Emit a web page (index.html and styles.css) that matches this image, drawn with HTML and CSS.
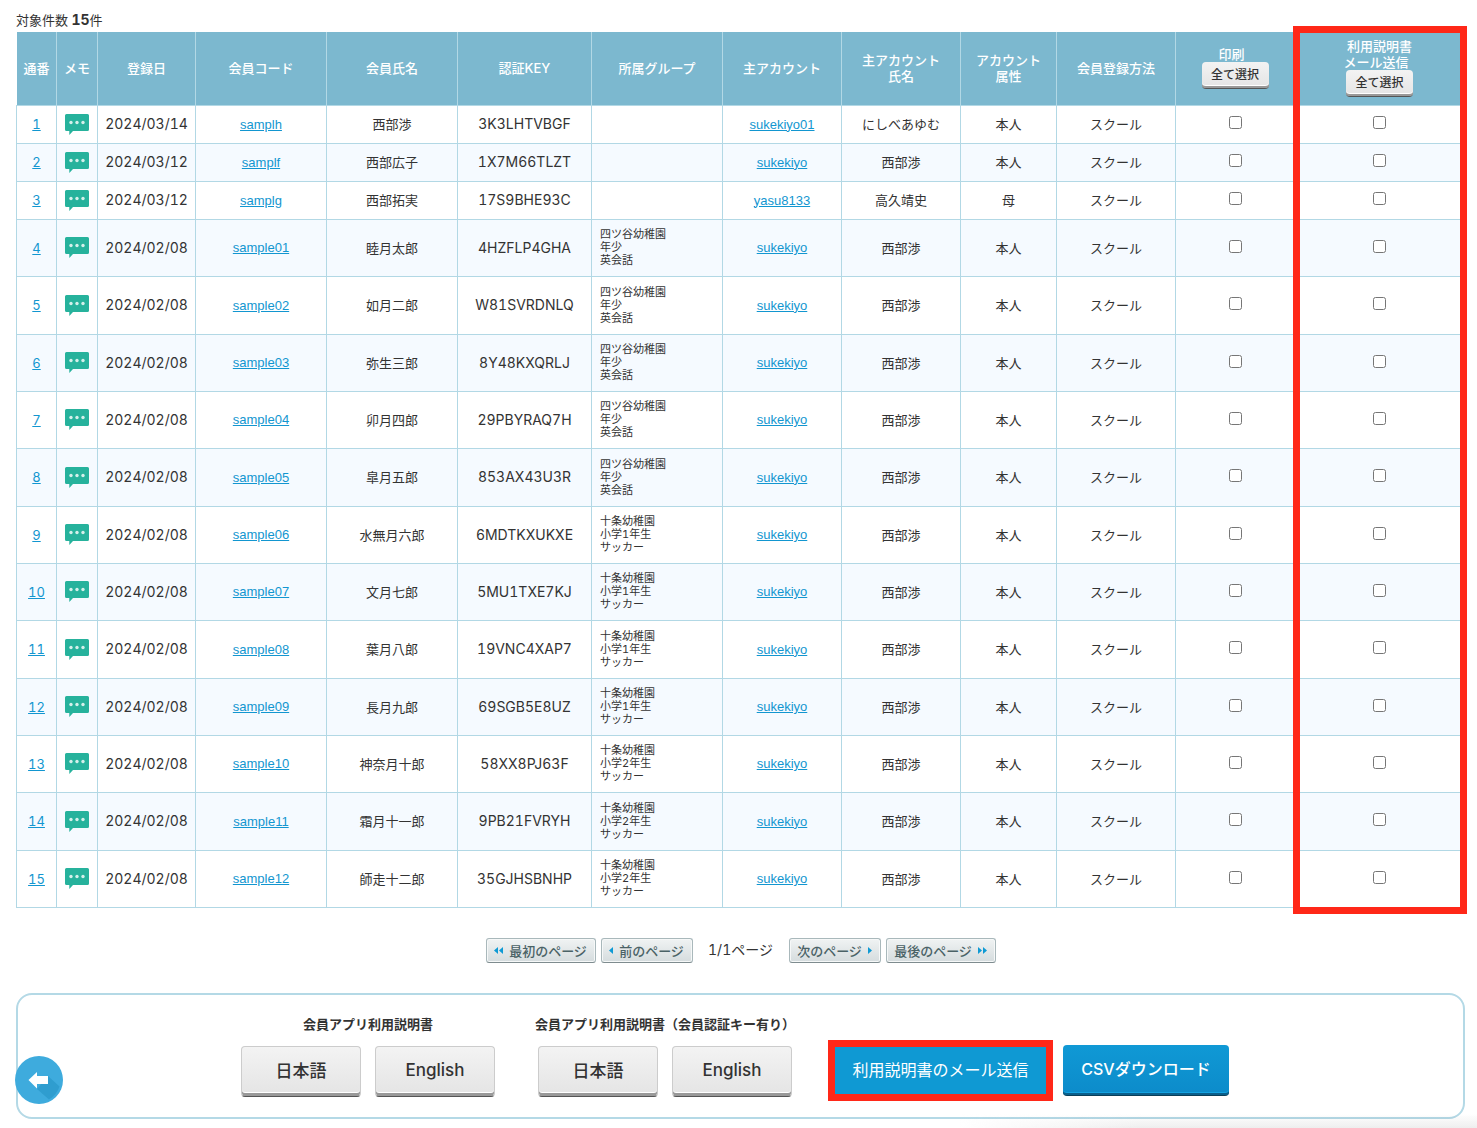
FILE: index.html
```html
<!DOCTYPE html>
<html lang="ja">
<head>
<meta charset="utf-8">
<title>会員一覧</title>
<link rel="stylesheet" href="styles.css">
</head>
<body>
<svg class="sprite" aria-hidden="true">
  <symbol id="memo" viewBox="0 0 24 21">
    <path d="M1.500 0h21A1.500 1.500 0 0 1 24 1.500v14a1.500 1.500 0 0 1-1.500 1.500H8L4.300 21V17H1.500A1.500 1.500 0 0 1 0 15.500v-14A1.500 1.500 0 0 1 1.500 0z" fill="#26b29c"/>
    <circle cx="6" cy="8.500" r="1.700" fill="#d4f0eb"/><circle cx="12" cy="8.500" r="1.700" fill="#d4f0eb"/><circle cx="18" cy="8.500" r="1.700" fill="#d4f0eb"/>
  </symbol>
  <symbol id="left" viewBox="0 0 4 7"><path d="M4 0v7L0 3.500z" fill="#0e9ad4"/></symbol>
  <symbol id="right" viewBox="0 0 4 7"><path d="M0 0v7l4-3.500z" fill="#0e9ad4"/></symbol>
</svg>
<main>
  <p class="count">対象件数 <b>15</b>件</p>
  <div class="table-wrap">
    <table class="members">
      <colgroup>
        <col class="c-no"><col class="c-memo"><col class="c-date"><col class="c-code"><col class="c-code"><col class="c-key"><col class="c-code"><col class="c-account"><col class="c-account"><col class="c-attr"><col class="c-account"><col class="c-account"><col>
      </colgroup>
      <thead>
        <tr>
          <th>通番</th><th>メモ</th><th>登録日</th><th>会員コード</th><th>会員氏名</th><th>認証KEY</th><th>所属グループ</th><th>主アカウント</th><th>主アカウント<br>氏名</th><th>アカウント<br>属性</th><th>会員登録方法</th>
          <th>印刷&nbsp;&nbsp;<button type="button" class="select-all">全て選択</button></th>
          <th>利用説明書<br>メール送信&nbsp;&nbsp;<button type="button" class="select-all">全て選択</button></th>
        </tr>
      </thead>
      <tbody>
        <tr><td><a href="#">1</a></td><td><svg class="memo"><use href="#memo"/></svg></td><td class="code">2024/03/14</td><td><a class="id" href="#">samplh</a></td><td>西部渉</td><td class="code">3K3LHTVBGF</td><td class="group"></td><td><a class="id" href="#">sukekiyo01</a></td><td>にしべあゆむ</td><td>本人</td><td>スクール</td><td><input type="checkbox" aria-label="印刷 1"></td><td><input type="checkbox" aria-label="メール送信 1"></td></tr>
        <tr><td><a href="#">2</a></td><td><svg class="memo"><use href="#memo"/></svg></td><td class="code">2024/03/12</td><td><a class="id" href="#">samplf</a></td><td>西部広子</td><td class="code">1X7M66TLZT</td><td class="group"></td><td><a class="id" href="#">sukekiyo</a></td><td>西部渉</td><td>本人</td><td>スクール</td><td><input type="checkbox" aria-label="印刷 2"></td><td><input type="checkbox" aria-label="メール送信 2"></td></tr>
        <tr><td><a href="#">3</a></td><td><svg class="memo"><use href="#memo"/></svg></td><td class="code">2024/03/12</td><td><a class="id" href="#">samplg</a></td><td>西部拓実</td><td class="code">17S9BHE93C</td><td class="group"></td><td><a class="id" href="#">yasu8133</a></td><td>高久靖史</td><td>母</td><td>スクール</td><td><input type="checkbox" aria-label="印刷 3"></td><td><input type="checkbox" aria-label="メール送信 3"></td></tr>
        <tr><td><a href="#">4</a></td><td><svg class="memo"><use href="#memo"/></svg></td><td class="code">2024/02/08</td><td><a class="id" href="#">sample01</a></td><td>睦月太郎</td><td class="code">4HZFLP4GHA</td><td class="group">四ツ谷幼稚園<br>年少<br>英会話</td><td><a class="id" href="#">sukekiyo</a></td><td>西部渉</td><td>本人</td><td>スクール</td><td><input type="checkbox" aria-label="印刷 4"></td><td><input type="checkbox" aria-label="メール送信 4"></td></tr>
        <tr><td><a href="#">5</a></td><td><svg class="memo"><use href="#memo"/></svg></td><td class="code">2024/02/08</td><td><a class="id" href="#">sample02</a></td><td>如月二郎</td><td class="code">W81SVRDNLQ</td><td class="group">四ツ谷幼稚園<br>年少<br>英会話</td><td><a class="id" href="#">sukekiyo</a></td><td>西部渉</td><td>本人</td><td>スクール</td><td><input type="checkbox" aria-label="印刷 5"></td><td><input type="checkbox" aria-label="メール送信 5"></td></tr>
        <tr><td><a href="#">6</a></td><td><svg class="memo"><use href="#memo"/></svg></td><td class="code">2024/02/08</td><td><a class="id" href="#">sample03</a></td><td>弥生三郎</td><td class="code">8Y48KXQRLJ</td><td class="group">四ツ谷幼稚園<br>年少<br>英会話</td><td><a class="id" href="#">sukekiyo</a></td><td>西部渉</td><td>本人</td><td>スクール</td><td><input type="checkbox" aria-label="印刷 6"></td><td><input type="checkbox" aria-label="メール送信 6"></td></tr>
        <tr><td><a href="#">7</a></td><td><svg class="memo"><use href="#memo"/></svg></td><td class="code">2024/02/08</td><td><a class="id" href="#">sample04</a></td><td>卯月四郎</td><td class="code">29PBYRAQ7H</td><td class="group">四ツ谷幼稚園<br>年少<br>英会話</td><td><a class="id" href="#">sukekiyo</a></td><td>西部渉</td><td>本人</td><td>スクール</td><td><input type="checkbox" aria-label="印刷 7"></td><td><input type="checkbox" aria-label="メール送信 7"></td></tr>
        <tr><td><a href="#">8</a></td><td><svg class="memo"><use href="#memo"/></svg></td><td class="code">2024/02/08</td><td><a class="id" href="#">sample05</a></td><td>皐月五郎</td><td class="code">853AX43U3R</td><td class="group">四ツ谷幼稚園<br>年少<br>英会話</td><td><a class="id" href="#">sukekiyo</a></td><td>西部渉</td><td>本人</td><td>スクール</td><td><input type="checkbox" aria-label="印刷 8"></td><td><input type="checkbox" aria-label="メール送信 8"></td></tr>
        <tr><td><a href="#">9</a></td><td><svg class="memo"><use href="#memo"/></svg></td><td class="code">2024/02/08</td><td><a class="id" href="#">sample06</a></td><td>水無月六郎</td><td class="code">6MDTKXUKXE</td><td class="group">十条幼稚園<br>小学1年生<br>サッカー</td><td><a class="id" href="#">sukekiyo</a></td><td>西部渉</td><td>本人</td><td>スクール</td><td><input type="checkbox" aria-label="印刷 9"></td><td><input type="checkbox" aria-label="メール送信 9"></td></tr>
        <tr><td><a href="#">10</a></td><td><svg class="memo"><use href="#memo"/></svg></td><td class="code">2024/02/08</td><td><a class="id" href="#">sample07</a></td><td>文月七郎</td><td class="code">5MU1TXE7KJ</td><td class="group">十条幼稚園<br>小学1年生<br>サッカー</td><td><a class="id" href="#">sukekiyo</a></td><td>西部渉</td><td>本人</td><td>スクール</td><td><input type="checkbox" aria-label="印刷 10"></td><td><input type="checkbox" aria-label="メール送信 10"></td></tr>
        <tr><td><a href="#">11</a></td><td><svg class="memo"><use href="#memo"/></svg></td><td class="code">2024/02/08</td><td><a class="id" href="#">sample08</a></td><td>葉月八郎</td><td class="code">19VNC4XAP7</td><td class="group">十条幼稚園<br>小学1年生<br>サッカー</td><td><a class="id" href="#">sukekiyo</a></td><td>西部渉</td><td>本人</td><td>スクール</td><td><input type="checkbox" aria-label="印刷 11"></td><td><input type="checkbox" aria-label="メール送信 11"></td></tr>
        <tr><td><a href="#">12</a></td><td><svg class="memo"><use href="#memo"/></svg></td><td class="code">2024/02/08</td><td><a class="id" href="#">sample09</a></td><td>長月九郎</td><td class="code">69SGB5E8UZ</td><td class="group">十条幼稚園<br>小学1年生<br>サッカー</td><td><a class="id" href="#">sukekiyo</a></td><td>西部渉</td><td>本人</td><td>スクール</td><td><input type="checkbox" aria-label="印刷 12"></td><td><input type="checkbox" aria-label="メール送信 12"></td></tr>
        <tr><td><a href="#">13</a></td><td><svg class="memo"><use href="#memo"/></svg></td><td class="code">2024/02/08</td><td><a class="id" href="#">sample10</a></td><td>神奈月十郎</td><td class="code">58XX8PJ63F</td><td class="group">十条幼稚園<br>小学2年生<br>サッカー</td><td><a class="id" href="#">sukekiyo</a></td><td>西部渉</td><td>本人</td><td>スクール</td><td><input type="checkbox" aria-label="印刷 13"></td><td><input type="checkbox" aria-label="メール送信 13"></td></tr>
        <tr><td><a href="#">14</a></td><td><svg class="memo"><use href="#memo"/></svg></td><td class="code">2024/02/08</td><td><a class="id" href="#">sample11</a></td><td>霜月十一郎</td><td class="code">9PB21FVRYH</td><td class="group">十条幼稚園<br>小学2年生<br>サッカー</td><td><a class="id" href="#">sukekiyo</a></td><td>西部渉</td><td>本人</td><td>スクール</td><td><input type="checkbox" aria-label="印刷 14"></td><td><input type="checkbox" aria-label="メール送信 14"></td></tr>
        <tr><td><a href="#">15</a></td><td><svg class="memo"><use href="#memo"/></svg></td><td class="code">2024/02/08</td><td><a class="id" href="#">sample12</a></td><td>師走十二郎</td><td class="code">35GJHSBNHP</td><td class="group">十条幼稚園<br>小学2年生<br>サッカー</td><td><a class="id" href="#">sukekiyo</a></td><td>西部渉</td><td>本人</td><td>スクール</td><td><input type="checkbox" aria-label="印刷 15"></td><td><input type="checkbox" aria-label="メール送信 15"></td></tr>
      </tbody>
    </table>
    <div class="column-mark"></div>
  </div>

  <nav class="pager">
    <button type="button" class="page wide"><span class="arrows"><svg><use href="#left"/></svg><svg><use href="#left"/></svg></span>最初のページ</button>
    <button type="button" class="page"><span class="arrows"><svg><use href="#left"/></svg></span>前のページ</button>
    <span class="page-now">1/1ページ</span>
    <button type="button" class="page">次のページ<span class="arrows"><svg><use href="#right"/></svg></span></button>
    <button type="button" class="page wide">最後のページ<span class="arrows"><svg><use href="#right"/></svg><svg><use href="#right"/></svg></span></button>
  </nav>

  <section class="actions">
    <div class="manual">
      <h2>会員アプリ利用説明書</h2>
      <div class="langs"><button type="button" class="btn">日本語</button><button type="button" class="btn">English</button></div>
    </div>
    <div class="manual">
      <h2>会員アプリ利用説明書（会員認証キー有り）</h2>
      <div class="langs"><button type="button" class="btn">日本語</button><button type="button" class="btn">English</button></div>
    </div>
    <div class="sends">
      <button type="button" class="send">利用説明書のメール送信</button>
      <button type="button" class="btn csv">CSVダウンロード</button>
    </div>
    <a class="back" href="#" aria-label="戻る">
      <svg viewBox="0 0 48 48">
        <circle cx="24" cy="24" r="24" fill="#3eabdd"/>
        <path d="M22 33L33 20 44.500 30.500A24 24 0 0 1 34 43.500z" fill="#2f9dcf"/>
        <path d="M13.500 24L22 16v4h11v8H22v4.500z" fill="#fff"/>
      </svg>
    </a>
  </section>
</main>
</body>
</html>
```
FILE: styles.css
```css
* { box-sizing: border-box; }

body {
  margin: 0;
  padding: 12px 12px 9px 16px;
  background: #fff;
  color: #333;
  font: 13px/16px Inter, "Noto Sans CJK JP", sans-serif;
  font-variant-numeric: tabular-nums;
}

body::after {
  content: "";
  position: fixed;
  right: 0;
  bottom: 0;
  width: 35%;
  height: 14px;
  background: linear-gradient(to right, #fff, transparent 35%), linear-gradient(transparent, #eee);
  mix-blend-mode: multiply;
  pointer-events: none;
}

button { font-family: inherit; margin: 0; cursor: pointer; }
a { color: #1296d0; text-decoration: underline; }
.sprite { position: absolute; width: 0; height: 0; }

.count { margin: 0 0 4px; }
.count b { font-size: 14px; }

/* Member table */
.table-wrap { position: relative; }

.members {
  width: 100%;
  table-layout: fixed;
  border-collapse: collapse;
  text-align: center;
}

.c-no { width: 40px; }
.c-memo { width: 41px; }
.c-date { width: 98px; }
.c-code { width: 131px; }
.c-key { width: 134px; }
.c-account { width: 119px; }
.c-attr { width: 96px; }

.members th {
  height: 73px;
  padding: 0 0 1px;
  border: 1px solid #b2d8e5;
  border-top: 0;
  background: #7cb8cf;
  color: #fff;
  font-weight: 500;
}

.members th:first-child { border-left-color: #fff; }

.members td {
  height: 38px;
  padding: 0;
  border: 1px solid #b2d8e5;
}

.members tr:nth-child(n+4) td { height: 57px; }
.members tr:nth-child(3n+5) td { height: 58px; }
.members tbody tr:nth-child(even) { background: #f5faff; }

.members .code { font-size: 14px; }
.members .id { font-family: "Liberation Sans", sans-serif; }

.members .group {
  padding: 0 8px;
  font-size: 11px;
  line-height: 13px;
  text-align: left;
}

.memo { display: block; width: 24px; height: 21px; margin: 0 auto; }
.members input { display: block; margin: 0 auto 3px; }

.select-all {
  display: block;
  width: 67px;
  height: 27px;
  margin: 0 auto;
  padding: 0 0 3px;
  border: 0;
  border-bottom: 1px solid #555;
  border-radius: 4px;
  background: linear-gradient(#f3f3f3, #e4e4e4);
  box-shadow: inset 0 -2px #999, inset 0 -3px #fff;
  color: #333;
  font-size: 12px;
  font-weight: 500;
}

.column-mark {
  position: absolute;
  top: -6px;
  right: -2px;
  bottom: -6px;
  width: 174px;
  border: 7px solid #ff2818;
  pointer-events: none;
}

/* Pager */
.pager {
  display: flex;
  justify-content: center;
  align-items: center;
  gap: 5px;
  margin-top: 30px;
}

.page {
  display: flex;
  justify-content: center;
  align-items: center;
  gap: 6px;
  width: 92px;
  height: 25px;
  padding: 0;
  border: 1px solid #a9b8bb;
  border-bottom-color: #7e8c8f;
  border-radius: 3px;
  background: linear-gradient(#f0f3f3, #d5dcde);
  box-shadow: inset 0 0 0 1px #f6f8f8;
  color: #4a6266;
  font-size: 13px;
  font-weight: 500;
}

.page.wide { width: 110px; }
.arrows { display: flex; gap: 1px; }
.arrows svg { width: 4px; height: 7px; }
.page-now { width: 86px; font-size: 14px; text-align: center; }

/* Output and mail actions */
.actions {
  position: relative;
  display: flex;
  justify-content: center;
  gap: 43px;
  margin-top: 30px;
  padding: 21px 11px 20px 0;
  border: 2px solid #b4d9e6;
  border-radius: 16px;
}

.manual {
  display: flex;
  flex-direction: column;
  align-items: center;
  gap: 14px;
  width: 254px;
}

.manual h2 {
  margin: 0;
  font-size: 13px;
  line-height: 16px;
  font-weight: 700;
  white-space: nowrap;
}

.langs { display: flex; gap: 14px; }

.btn {
  width: 120px;
  height: 51px;
  padding: 0 0 3px;
  border: 1px solid #ccc;
  border-bottom-color: #555;
  border-radius: 4px;
  background: linear-gradient(#f3f3f3, #e4e4e4);
  box-shadow: inset 0 -3px #999, inset 0 -4px #fff;
  color: #333;
  font-size: 17px;
  font-weight: 500;
}

.sends {
  display: flex;
  align-items: center;
  align-self: flex-end;
  gap: 17px;
  padding-bottom: 1px;
}

.send {
  width: 211px;
  height: 47px;
  padding: 0 0 2px;
  border: 0;
  background: #0f99d3;
  outline: 7px solid #ff2818;
  color: #fff;
  font-size: 16px;
}

.csv {
  width: 166px;
  border: 0;
  border-bottom: 1px solid #0b3f58;
  background: linear-gradient(#1099d5, #0c8bca);
  box-shadow: inset 0 -2px #0a5f8b, inset 0 -3px #14a3e2;
  color: #fff;
  font-size: 16px;
}

.back { position: absolute; left: -3px; bottom: 13px; width: 48px; height: 48px; }
.back svg { display: block; width: 48px; height: 48px; }
```
